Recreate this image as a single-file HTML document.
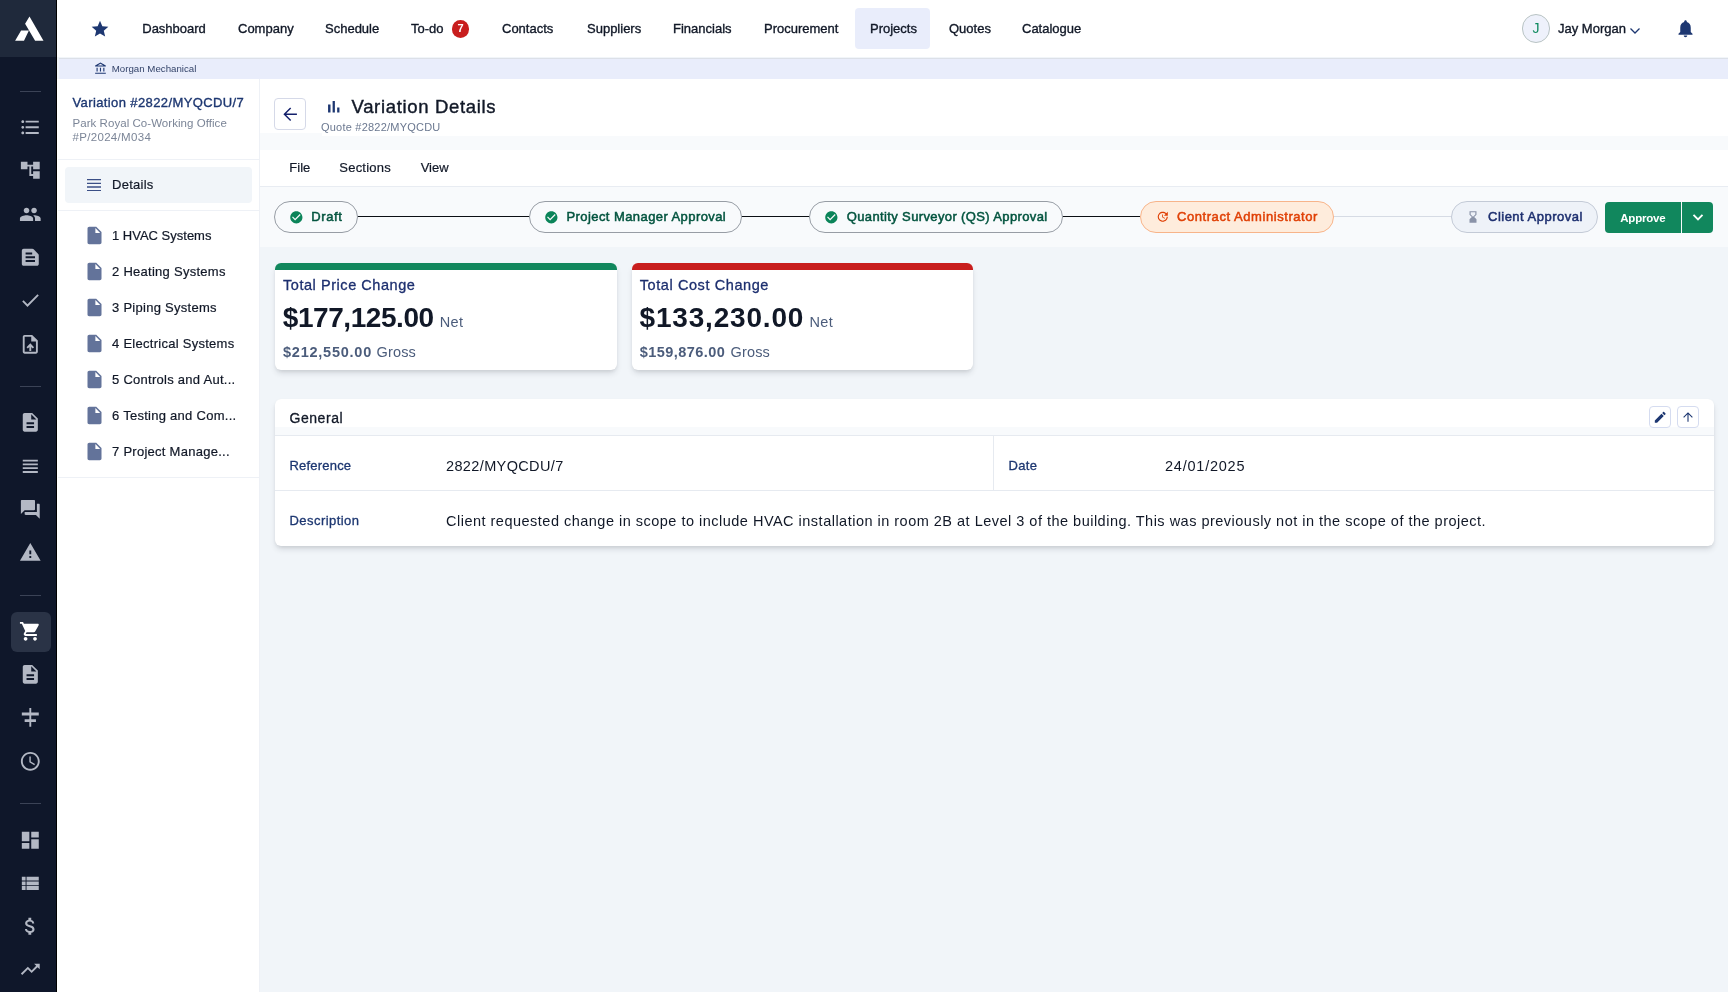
<!DOCTYPE html>
<html lang="en">
<head>
<meta charset="utf-8">
<title>Variation Details</title>
<style>
*{box-sizing:border-box;margin:0;padding:0}
html,body{width:1728px;height:992px;overflow:hidden}
body{will-change:transform;font-family:"Liberation Sans",sans-serif;background:#f1f5f9;color:#111827;position:relative;-webkit-font-smoothing:antialiased}
.abs{position:absolute}
svg{display:block}
/* left rail */
#rail{position:absolute;left:0;top:0;width:56px;height:992px;background:#0f172a}
#rail .logo{position:absolute;left:0;top:0;width:56px;height:57px;background:#1f293b}
#railedge{position:absolute;left:56px;top:0;width:1.100px;height:992px;background:#000}
.ri{position:absolute;left:19.300px;width:22.6px;height:22.6px;fill:#b3b8c4}
.rd{position:absolute;left:20px;width:21px;height:1px;background:#3b4356}
/* top nav */
#top{position:absolute;left:57px;top:0;width:1671px;height:57px;background:#fff}
#topline{position:absolute;left:58.500px;top:57.500px;width:1670px;height:1.500px;background:#dce0e8}
.nv{position:absolute;top:0;height:57px;line-height:57px;font-size:13px;color:#111827;white-space:nowrap;-webkit-text-stroke:.35px #111827}
#crumb{position:absolute;left:58.500px;top:59px;width:1670px;height:20px;background:#e9edfb}
/* side panel */
#side{position:absolute;left:57px;top:79px;width:203px;height:913px;background:#fff;border-right:1px solid #eef1f6}
.li{position:absolute;left:54px;letter-spacing:.27px;font-size:13px;line-height:16px;color:#111827;white-space:nowrap;-webkit-text-stroke:.2px #111827}
.fi{position:absolute;left:25.900px;width:21px;height:21px;fill:#63739a}
.pill{position:absolute;top:201px;height:32px;border-radius:16px;border:1px solid #9aa3b2;background:#f8fafc;font-size:13px;line-height:30px;white-space:nowrap}
.pill span{position:absolute;top:0}
.card{position:absolute;top:262.75px;width:341.75px;height:106.75px;background:#fff;border-radius:6px;box-shadow:0 4px 6px -1px rgba(15,23,42,.13),0 2px 4px -1px rgba(15,23,42,.09),0 0 1px rgba(15,23,42,.06);overflow:hidden}
.card .bar{position:absolute;left:0;top:0;width:100%;height:7px}
.t{position:absolute;white-space:nowrap}
</style>
</head>
<body>
<div id="rail">
<div class="logo"><svg class="abs" style="left:0;top:0" width="57" height="57" viewBox="0 0 57 57"><path fill="#fff" d="M29.5 16.4L43.5 40.8H35.1L25.1 23.8zM21.1 30.4H28.9L24 40.8H15.1z"/></svg></div>
<div class="rd" style="top:90.500px"></div>
<div class="rd" style="top:385.500px"></div>
<div class="rd" style="top:594.500px"></div>
<div class="rd" style="top:802.700px"></div>
<div class="abs" style="left:11px;top:612px;width:39.5px;height:39.5px;border-radius:6px;background:#2a3346"></div>
<svg class="ri" style="top:116.20px" viewBox="0 0 24 24"><path d="M4 10.5c-.83 0-1.5.67-1.5 1.5s.67 1.5 1.5 1.5 1.5-.67 1.5-1.5-.67-1.5-1.5-1.5zm0-6c-.83 0-1.5.67-1.5 1.5S3.170 7.500 4 7.500 5.500 6.830 5.500 6 4.830 4.500 4 4.500zm0 12c-.83 0-1.500.680-1.500 1.500s.680 1.500 1.500 1.500 1.500-.680 1.500-1.500-.670-1.500-1.500-1.500zM7 19h14v-2H7v2zm0-6h14v-2H7v2zm0-8v2h14V5H7z"/></svg>
<svg class="ri" style="top:159.20px" viewBox="0 0 24 24"><path d="M22 11V3h-7v3H9V3H2v8h7V8h2v10h4v3h7v-8h-7v3h-2V8h2v3z"/></svg>
<svg class="ri" style="top:202.70px" viewBox="0 0 24 24"><path d="M16 11c1.660 0 2.990-1.340 2.990-3S17.660 5 16 5c-1.660 0-3 1.340-3 3s1.340 3 3 3zm-8 0c1.660 0 2.990-1.340 2.990-3S9.660 5 8 5C6.340 5 5 6.340 5 8s1.340 3 3 3zm0 2c-2.330 0-7 1.170-7 3.500V19h14v-2.500c0-2.330-4.670-3.500-7-3.500zm8 0c-.290 0-.620.020-.970.050 1.160.840 1.970 1.970 1.970 3.450V19h6v-2.500c0-2.330-4.670-3.500-7-3.500z"/></svg>
<svg class="ri" style="top:246.20px" viewBox="0 0 24 24"><path d="M20.410 8.410l-4.830-4.830c-.370-.370-.880-.580-1.410-.580H5c-1.100 0-2 .9-2 2v14c0 1.100.9 2 2 2h14c1.100 0 2-.9 2-2V9.830c0-.530-.210-1.040-.590-1.420zM7 7h7v2H7V7zm10 10H7v-2h10v2zm0-4H7v-2h10v2z"/></svg>
<svg class="ri" style="top:289.20px" viewBox="0 0 24 24"><path d="M9 16.170L4.830 12l-1.420 1.410L9 19 21 7l-1.410-1.410z"/></svg>
<svg class="ri" style="top:332.70px" viewBox="0 0 24 24"><path d="M14 2H6c-1.100 0-1.990.9-1.990 2L4 20c0 1.100.890 2 1.990 2H18c1.100 0 2-.9 2-2V8l-6-6zm4 18H6V4h7v5h5v11zM8 15.010l1.410 1.410L11 14.840V19h2v-4.160l1.590 1.590L16 15.010 12.010 11z"/></svg>
<svg class="ri" style="top:411.40px" viewBox="0 0 24 24"><path d="M14 2H6c-1.100 0-1.990.9-1.990 2L4 20c0 1.100.890 2 1.990 2H18c1.100 0 2-.9 2-2V8l-6-6zm2 16H8v-2h8v2zm0-4H8v-2h8v2zm-3-5V3.500L18.500 9H13z"/></svg>
<svg class="ri" style="top:454.90px" viewBox="0 0 24 24"><path d="M4 15h16v-2H4v2zm0 4h16v-2H4v2zm0-8h16V9H4v2zm0-6v2h16V5H4z"/></svg>
<svg class="ri" style="top:497.90px" viewBox="0 0 24 24"><path d="M21 6h-2v9H6v2c0 .550.450 1 1 1h11l4 4V7c0-.550-.450-1-1-1zm-4 6V3c0-.550-.450-1-1-1H3c-.550 0-1 .450-1 1v14l4-4h10c.550 0 1-.450 1-1z"/></svg>
<svg class="ri" style="top:541.40px" viewBox="0 0 24 24"><path d="M1 21h22L12 2 1 21zm12-3h-2v-2h2v2zm0-4h-2v-4h2v4z"/></svg>
<svg class="ri" style="top:620.45px;fill:#fff" viewBox="0 0 24 24"><path d="M7 18c-1.100 0-1.990.9-1.990 2S5.900 22 7 22s2-.9 2-2-.9-2-2-2zM1 2v2h2l3.600 7.590-1.350 2.450c-.160.280-.250.610-.250.960 0 1.100.9 2 2 2h12v-2H7.420c-.140 0-.250-.110-.250-.250l.030-.120.900-1.630h7.450c.750 0 1.410-.410 1.750-1.030l3.580-6.490c.080-.140.120-.310.120-.480 0-.550-.450-1-1-1H5.210l-.940-2H1zm16 16c-1.100 0-1.990.9-1.990 2s.890 2 1.990 2 2-.9 2-2-.9-2-2-2z"/></svg>
<svg class="ri" style="top:663.45px" viewBox="0 0 24 24"><path d="M14 2H6c-1.100 0-1.990.9-1.990 2L4 20c0 1.100.890 2 1.990 2H18c1.100 0 2-.9 2-2V8l-6-6zm2 16H8v-2h8v2zm0-4H8v-2h8v2zm-3-5V3.500L18.500 9H13z"/></svg>
<svg class="ri" style="top:706.45px" viewBox="0 0 24 24"><path d="M11 2h2v5h8v3h-8v4h5v3h-5v5h-2v-5H6v-3h5v-4H3V7h8V2z"/></svg>
<svg class="ri" style="top:749.95px" viewBox="0 0 24 24"><path d="M11.990 2C6.470 2 2 6.480 2 12s4.470 10 9.990 10C17.520 22 22 17.520 22 12S17.520 2 11.990 2zM12 20c-4.420 0-8-3.580-8-8s3.580-8 8-8 8 3.580 8 8-3.580 8-8 8zm.5-13H11v6l5.250 3.150.750-1.230-4.500-2.670z"/></svg>
<svg class="ri" style="top:828.70px" viewBox="0 0 24 24"><path d="M3 13h8V3H3v10zm0 8h8v-6H3v6zm10 0h8V11h-8v10zm0-18v6h8V3h-8z"/></svg>
<svg class="ri" style="top:872.20px" viewBox="0 0 24 24"><path d="M3 14h4v-4H3v4zm0 5h4v-4H3v4zM3 9h4V5H3v4zm5 5h13v-4H8v4zm0 5h13v-4H8v4zM8 5v4h13V5H8z"/></svg>
<svg class="ri" style="top:915.20px" viewBox="0 0 24 24"><path d="M11.800 10.900c-2.270-.590-3-1.200-3-2.150 0-1.090 1.010-1.850 2.700-1.850 1.780 0 2.440.850 2.500 2.100h2.210c-.070-1.720-1.120-3.300-3.210-3.810V3h-3v2.160c-1.940.420-3.500 1.680-3.500 3.610 0 2.310 1.910 3.460 4.700 4.130 2.500.6 3 1.480 3 2.410 0 .690-.490 1.790-2.700 1.790-2.060 0-2.870-.920-2.980-2.100h-2.200c.120 2.190 1.760 3.420 3.680 3.830V21h3v-2.150c1.950-.370 3.500-1.500 3.500-3.550 0-2.840-2.430-3.810-4.700-4.400z"/></svg>
<svg class="ri" style="top:958.20px" viewBox="0 0 24 24"><path d="M16 6l2.290 2.290-4.880 4.880-4-4L2 16.590 3.410 18l6-6 4 4 6.300-6.290L22 12V6z"/></svg>
</div>
<div id="railedge"></div>
<div id="top"><div class="abs" style="left:1px;top:0;width:1670px;height:57px">
<svg class="abs" style="left:31.75px;top:18.75px" width="20" height="20" viewBox="0 0 24 24"><path fill="#1d3771" d="M12 17.27L18.18 21l-1.64-7.03L22 9.24l-7.19-.61L12 2 9.19 8.63 2 9.24l5.46 4.73L5.82 21z"/></svg>
<div class="abs" style="left:797px;top:8px;width:75px;height:41px;border-radius:4px;background:#e9edfb"></div>
<div class="nv" style="left:84.25px">Dashboard</div>
<div class="nv" style="left:180px">Company</div>
<div class="nv" style="left:267px">Schedule</div>
<div class="nv" style="left:353px">To-do</div>
<div class="nv" style="left:444px">Contacts</div>
<div class="nv" style="left:529px">Suppliers</div>
<div class="nv" style="left:615px">Financials</div>
<div class="nv" style="left:706px">Procurement</div>
<div class="nv" style="left:812px">Projects</div>
<div class="nv" style="left:891px">Quotes</div>
<div class="nv" style="left:964px">Catalogue</div>
<div class="abs" style="left:393.75px;top:20px;width:17.5px;height:17.5px;border-radius:50%;background:#c81e1e;color:#fff;font-size:11px;font-weight:bold;line-height:17.5px;text-align:center">7</div>
<div class="abs" style="left:1463.700px;top:14.200px;width:28.800px;height:28.800px;border-radius:50%;background:#eef1fb;border:1px solid #b9c4c4;color:#0e8a5f;font-size:14px;line-height:27px;text-align:center">J</div>
<div class="nv" style="left:1500px">Jay Morgan</div>
<svg class="abs" style="left:1571px;top:27px" width="12" height="8" viewBox="0 0 12 8"><path d="M1.5 1.5L6 6l4.500-4.500" fill="none" stroke="#1d3771" stroke-width="1.3"/></svg>
<svg class="abs" style="left:1617px;top:18px" width="21" height="21" viewBox="0 0 24 24"><path fill="#1d3771" d="M12 22c1.1 0 2-.9 2-2h-4c0 1.1.89 2 2 2zm6-6v-5c0-3.07-1.64-5.64-4.5-6.32V4c0-.83-.67-1.500-1.500-1.500s-1.500.67-1.500 1.500v.68C7.630 5.360 6 7.920 6 11v5l-2 2v1h16v-1l-2-2z"/></svg>
</div></div>
<div id="topline"></div>
<div id="crumb"><svg class="abs" style="left:35.800px;top:3.300px" width="13.500" height="13.500" viewBox="0 0 24 24"><path fill="#1d3771" d="M6.500 10h-2v7h2v-7zm6 0h-2v7h2v-7zm8.500 9H2v2h19v-2zm-2.500-9h-2v7h2v-7zm-7-6.740L16.710 6H6.290l5.210-2.740m0-2.260L2 6v2h19V6l-9.500-5z"/></svg><div class="t" style="left:53.300px;top:-.200px;font-size:9.700px;line-height:20.500px;color:#34446a">Morgan Mechanical</div></div>
<div id="side"><div class="abs" style="left:1px;top:0;width:201px;height:913px">
<div class="t" style="left:14.5px;top:15.5px;font-size:13px;line-height:16px;color:#1d3771;-webkit-text-stroke:.35px #1d3771;letter-spacing:.39px">Variation #2822/MYQCDU/7</div>
<div class="t" style="left:14.5px;top:36.5px;font-size:11.5px;line-height:14.5px;letter-spacing:.05px;color:#7b8597;white-space:normal;width:180px">Park Royal Co-Working Office<br><span style="letter-spacing:.32px">#P/2024/M034</span></div>
<div class="abs" style="left:0;top:80px;width:201px;height:1px;background:#eef1f6"></div>
<div class="abs" style="left:7.4px;top:88px;width:187px;height:35.5px;border-radius:4px;background:#f1f5f9"></div>
<svg class="abs" style="left:28.6px;top:99.5px" width="14.4" height="12.4" viewBox="0 0 14.4 12.4"><path d="M0 .7h14.400M0 4.370h14.400M0 8.030h14.400M0 11.700h14.400" stroke="#3b4f86" stroke-width="1.3" fill="none"/></svg>
<div class="li" style="top:97.5px">Details</div>
<div class="abs" style="left:0;top:131px;width:201px;height:1px;background:#eef1f6"></div>
<svg class="fi" style="top:146.1px" viewBox="0 0 24 24"><path d="M6 2c-1.100 0-1.990.9-1.990 2L4 20c0 1.100.890 2 1.990 2H18c1.100 0 2-.9 2-2V8l-6-6H6zm7 7V3.500L18.500 9H13z"/></svg>
<div class="li" style="top:149.4px;letter-spacing:0">1 HVAC Systems</div>
<svg class="fi" style="top:182.1px" viewBox="0 0 24 24"><path d="M6 2c-1.100 0-1.990.9-1.990 2L4 20c0 1.100.890 2 1.990 2H18c1.100 0 2-.9 2-2V8l-6-6H6zm7 7V3.500L18.500 9H13z"/></svg>
<div class="li" style="top:185.4px">2 Heating Systems</div>
<svg class="fi" style="top:218.1px" viewBox="0 0 24 24"><path d="M6 2c-1.100 0-1.990.9-1.990 2L4 20c0 1.100.890 2 1.990 2H18c1.100 0 2-.9 2-2V8l-6-6H6zm7 7V3.500L18.500 9H13z"/></svg>
<div class="li" style="top:221.4px">3 Piping Systems</div>
<svg class="fi" style="top:254.1px" viewBox="0 0 24 24"><path d="M6 2c-1.100 0-1.990.9-1.990 2L4 20c0 1.100.890 2 1.990 2H18c1.100 0 2-.9 2-2V8l-6-6H6zm7 7V3.500L18.500 9H13z"/></svg>
<div class="li" style="top:257.4px">4 Electrical Systems</div>
<svg class="fi" style="top:290.1px" viewBox="0 0 24 24"><path d="M6 2c-1.100 0-1.990.9-1.990 2L4 20c0 1.100.890 2 1.990 2H18c1.100 0 2-.9 2-2V8l-6-6H6zm7 7V3.500L18.500 9H13z"/></svg>
<div class="li" style="top:293.4px">5 Controls and Aut...</div>
<svg class="fi" style="top:326.1px" viewBox="0 0 24 24"><path d="M6 2c-1.100 0-1.990.9-1.990 2L4 20c0 1.100.890 2 1.990 2H18c1.100 0 2-.9 2-2V8l-6-6H6zm7 7V3.500L18.500 9H13z"/></svg>
<div class="li" style="top:329.4px">6 Testing and Com...</div>
<svg class="fi" style="top:362.1px" viewBox="0 0 24 24"><path d="M6 2c-1.100 0-1.990.9-1.990 2L4 20c0 1.100.890 2 1.990 2H18c1.100 0 2-.9 2-2V8l-6-6H6zm7 7V3.500L18.500 9H13z"/></svg>
<div class="li" style="top:365.4px">7 Project Manage...</div>
<div class="abs" style="left:0;top:398px;width:201px;height:1px;background:#eef1f6"></div>
</div></div>
<div id="main">
<div class="abs" style="left:260px;top:79px;width:1468px;height:57px;background:#fff"></div>
<div class="abs" style="left:260px;top:136px;width:1468px;height:14px;background:#f8fafc"></div><div class="abs" style="left:260px;top:133px;width:62px;height:3px;background:#f8fafc"></div>
<div class="abs" style="left:274.3px;top:98.2px;width:31.5px;height:31.5px;border:1px solid #d5d9e8;border-radius:4px;background:#fff"><svg class="abs" style="left:5px;top:5.100px" width="20" height="20" viewBox="0 0 24 24"><path d="M20.300 12.200H5.600M12.800 4.700l-7.500 7.500 7.500 7.500" fill="none" stroke="#13206b" stroke-width="1.750"/></svg></div>
<svg class="abs" style="left:324px;top:96.8px" width="19.500" height="19.500" viewBox="0 0 24 24"><path fill="#1d3771" d="M5 9.200h3V19H5zM10.600 5h2.800v14h-2.800zm5.600 8H19v6h-2.800z"/></svg>
<div class="t" style="left:351.5px;top:94.500px;font-size:18.5px;letter-spacing:.67px;line-height:24px;color:#111827;-webkit-text-stroke:.4px #111827">Variation Details</div>
<div class="t" style="left:321px;top:119.800px;font-size:11px;letter-spacing:.22px;line-height:14px;color:#6b7890">Quote #2822/MYQCDU</div>
<div class="abs" style="left:260px;top:150px;width:1468px;height:37px;background:#fff;border-bottom:1px solid #e8ecf2"></div>
<div class="t mn" style="left:289.3px;top:160px;font-size:13px;line-height:16px;color:#111827;-webkit-text-stroke:.2px #111827">File</div>
<div class="t mn" style="left:339.3px;top:160px;font-size:13px;line-height:16px;color:#111827;-webkit-text-stroke:.2px #111827;letter-spacing:.22px">Sections</div>
<div class="t mn" style="left:420.7px;top:160px;font-size:13px;line-height:16px;color:#111827;-webkit-text-stroke:.2px #111827">View</div>
<div class="abs" style="left:260px;top:187px;width:1468px;height:60px;background:#f8fafc"></div>
<div class="abs" style="left:357px;top:215.800px;width:783px;height:1.400px;background:#0b0f14"></div>
<div class="abs" style="left:1333px;top:215.700px;width:119px;height:1.600px;background:#d6dbe4"></div>
<div class="pill" style="left:274.25px;width:83.50px;background:#f8fafc;border-color:#979da5;color:#03543f"><svg class="abs" style="left:14.00px;top:7.65px" width="14.7" height="14.7" viewBox="0 0 24 24"><path fill="#0b8459" d="M12 2C6.480 2 2 6.480 2 12s4.480 10 10 10 10-4.480 10-10S17.520 2 12 2zm-2 15l-5-5 1.410-1.410L10 14.170l7.590-7.590L19 8l-9 9z"/></svg><span class="pt" style="left:36.00px;letter-spacing:0.58px;-webkit-text-stroke:.5px #03543f">Draft</span></div>
<div class="pill" style="left:529px;width:213.00px;background:#f8fafc;border-color:#979da5;color:#03543f"><svg class="abs" style="left:14.05px;top:7.65px" width="14.7" height="14.7" viewBox="0 0 24 24"><path fill="#0b8459" d="M12 2C6.480 2 2 6.480 2 12s4.480 10 10 10 10-4.480 10-10S17.520 2 12 2zm-2 15l-5-5 1.410-1.410L10 14.170l7.590-7.590L19 8l-9 9z"/></svg><span class="pt" style="left:36.50px;letter-spacing:0.42px;-webkit-text-stroke:.5px #03543f">Project Manager Approval</span></div>
<div class="pill" style="left:809.25px;width:253.50px;background:#f8fafc;border-color:#979da5;color:#03543f"><svg class="abs" style="left:14.05px;top:7.65px" width="14.7" height="14.7" viewBox="0 0 24 24"><path fill="#0b8459" d="M12 2C6.480 2 2 6.480 2 12s4.480 10 10 10 10-4.480 10-10S17.520 2 12 2zm-2 15l-5-5 1.410-1.410L10 14.170l7.590-7.590L19 8l-9 9z"/></svg><span class="pt" style="left:36.50px;letter-spacing:0.37px;-webkit-text-stroke:.5px #03543f">Quantity Surveyor (QS) Approval</span></div>
<div class="pill" style="left:1140px;width:194.25px;background:#feecdc;border-color:#f7b48a;color:#e04006"><svg class="abs" style="left:14.50px;top:8.25px" width="13.5" height="13.5" viewBox="0 0 24 24"><path fill="#e04006" d="M21 10.120h-6.780l2.740-2.820c-2.730-2.700-7.150-2.800-9.880-.1-2.730 2.710-2.730 7.080 0 9.790s7.150 2.710 9.880 0C18.320 15.650 19 14.080 19 12.100h2c0 1.980-.880 4.550-2.640 6.290-3.510 3.480-9.210 3.480-12.720 0-3.500-3.470-3.530-9.110-.020-12.580s9.140-3.470 12.650 0L21 3v7.120zM12.500 8v4.250l3.500 2.080-.720 1.210L11 13V8h1.500z"/></svg><span class="pt" style="left:36.00px;letter-spacing:0.56px;-webkit-text-stroke:.5px #e04006">Contract Administrator</span></div>
<div class="pill" style="left:1451.25px;width:146.75px;background:#eef2f8;border-color:#c3cad6;color:#1d2f6f"><svg class="abs" style="left:13.95px;top:8.00px" width="14" height="14" viewBox="0 0 24 24"><path fill="#8a93a8" d="M18 22l-.010-6L14 12l3.990-4.010L18 2H6v6l4 4-4 3.990V22h12zM8 7.500V4h8v3.500l-4 4-4-4z"/></svg><span class="pt" style="left:35.75px;letter-spacing:0.49px;-webkit-text-stroke:.5px #1d2f6f">Client Approval</span></div>
<div class="abs" style="left:1604.700px;top:201.500px;width:76.300px;height:31.300px;background:#11875d;border-radius:4px 0 0 4px;color:#fff;font-size:11.5px;font-weight:bold;line-height:32px;text-align:center;letter-spacing:-.2px" id="appr">Approve</div>
<div class="abs" style="left:1682px;top:201.500px;width:31.300px;height:31.300px;background:#11875d;border-radius:0 4px 4px 0"><svg class="abs" style="left:9.800px;top:11.500px" width="12" height="9" viewBox="0 0 12 9"><path d="M1.500 1.800L6 6.300l4.500-4.500" fill="none" stroke="#fff" stroke-width="1.900"/></svg></div>
<div class="card" style="left:274.75px"><div class="bar" style="background:#11875d"></div><div class="t ct" style="left:8.25px;top:13px;font-size:14.5px;line-height:18px;color:#1d2f6f;letter-spacing:0.55px;-webkit-text-stroke:.3px #1d2f6f">Total Price Change</div><div class="t ca" style="left:8px;top:37.600px;font-size:28px;line-height:36px;color:#111827;font-weight:bold;letter-spacing:-0.43px">$177,125.00</div><div class="t cn" style="left:165px;top:50px;font-size:14.5px;line-height:18px;color:#4b5c7b;letter-spacing:.3px">Net</div><div class="t cg" style="left:8.25px;top:80px;font-size:14.5px;line-height:18px;color:#4b5c7b;letter-spacing:0.76px;font-weight:bold">$212,550.00</div><div class="t cg" style="left:101.75px;top:80px;font-size:14.5px;line-height:18px;color:#4b5c7b;letter-spacing:.17px">Gross</div></div>
<div class="card" style="left:631.5px"><div class="bar" style="background:#c81e1e"></div><div class="t ct" style="left:8.25px;top:13px;font-size:14.5px;line-height:18px;color:#1d2f6f;letter-spacing:0.585px;-webkit-text-stroke:.3px #1d2f6f">Total Cost Change</div><div class="t ca" style="left:8px;top:37.600px;font-size:28px;line-height:36px;color:#111827;font-weight:bold;letter-spacing:0.82px">$133,230.00</div><div class="t cn" style="left:178px;top:50px;font-size:14.5px;line-height:18px;color:#4b5c7b;letter-spacing:.3px">Net</div><div class="t cg" style="left:8.25px;top:80px;font-size:14.5px;line-height:18px;color:#4b5c7b;letter-spacing:0.44px;font-weight:bold">$159,876.00</div><div class="t cg" style="left:99px;top:80px;font-size:14.5px;line-height:18px;color:#4b5c7b;letter-spacing:.17px">Gross</div></div>
<div id="gen" class="abs" style="left:274.5px;top:399.25px;width:1439.500px;height:146.25px;background:#fff;border-radius:6px;box-shadow:0 4px 6px -1px rgba(15,23,42,.13),0 2px 4px -1px rgba(15,23,42,.09),0 0 1px rgba(15,23,42,.06);overflow:hidden">
<div class="abs" style="left:0;top:28px;width:100%;height:8px;background:#f8fafc"></div>
<div class="abs" style="left:0;top:35.750px;width:100%;height:1px;background:#e6eaf0"></div>
<div class="abs" style="left:0;top:90.500px;width:100%;height:1px;background:#e6eaf0"></div>
<div class="abs" style="left:718.500px;top:36px;width:1px;height:55px;background:#e6eaf0"></div>
<div class="t g" style="left:15px;top:9.700px;font-size:14px;line-height:18px;color:#111827;letter-spacing:.55px;-webkit-text-stroke:.3px #111827">General</div>
<div class="t g" style="left:15px;top:58.700px;font-size:13px;line-height:16px;color:#1d3771;letter-spacing:.2px;-webkit-text-stroke:.3px #1d3771">Reference</div>
<div class="t g" style="left:171.500px;top:57.500px;font-size:14.5px;line-height:18px;color:#111827;letter-spacing:.37px">2822/MYQCDU/7</div>
<div class="t g" style="left:734px;top:58.700px;font-size:13px;line-height:16px;color:#1d3771;letter-spacing:.3px;-webkit-text-stroke:.3px #1d3771">Date</div>
<div class="t g" style="left:890.500px;top:57.500px;font-size:14.5px;line-height:18px;color:#111827;letter-spacing:.77px">24/01/2025</div>
<div class="t g" style="left:15px;top:113.500px;font-size:13px;line-height:16px;color:#1d3771;letter-spacing:.44px;-webkit-text-stroke:.3px #1d3771">Description</div>
<div class="t g" style="left:171.500px;top:112.500px;font-size:14.5px;line-height:18px;color:#111827;letter-spacing:.49px">Client requested change in scope to include HVAC installation in room 2B at Level 3 of the building. This was previously not in the scope of the project.</div>
<div class="abs" style="left:1374.500px;top:6.750px;width:22px;height:22px;border:1px solid #d5dcf0;border-radius:4px;background:#fff"><svg class="abs" style="left:2.800px;top:3px" width="14.500" height="14.500" viewBox="0 0 24 24"><path fill="#1d3771" d="M3 17.250V21h3.750L17.810 9.940l-3.750-3.750L3 17.250zM20.710 7.040c.390-.390.390-1.020 0-1.410l-2.340-2.340c-.390-.390-1.020-.390-1.410 0l-1.830 1.830 3.750 3.750 1.830-1.830z"/></svg></div>
<div class="abs" style="left:1402.700px;top:6.750px;width:22px;height:22px;border:1px solid #d5dcf0;border-radius:4px;background:#fff"><svg class="abs" style="left:3px;top:3px" width="14" height="14" viewBox="0 0 24 24"><path d="M12 20V5M4.500 12.500L12 5l7.500 7.500" fill="none" stroke="#1d3771" stroke-width="1.900"/></svg></div>
</div>
</div>
</body>
</html>
